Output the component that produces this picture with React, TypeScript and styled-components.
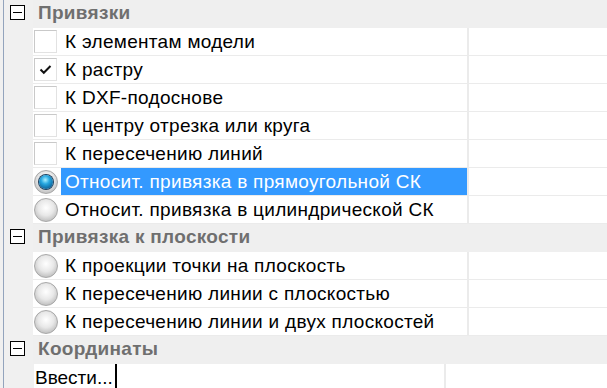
import React from 'react'
import styled, {createGlobalStyle} from 'styled-components'

const GlobalStyle = createGlobalStyle`
  html, body {
    margin: 0;
    padding: 0;
    background: #f0f0f0;
    overflow: hidden;
  }
  body {
    font-family: "Liberation Sans", Arial, sans-serif;
    letter-spacing: 0.3px;
  }
`

const Frame = styled.div`
  width: 607px;
  height: 388px;
  padding-left: 3px;
  box-sizing: border-box;
  background: #f0f0f0;
  overflow: hidden;
`
const Grid = styled.div`
  border-left: 1px solid #93a4bd;
  display: flex;
  flex-direction: column;
`
const GroupHeader = styled.div`
  display: flex;
  align-items: center;
  height: 28px;
  background: #efefef;
`
const Gutter = styled.div`
  width: 29px;
  flex: none;
  display: flex;
  align-items: center;
  justify-content: center;
  align-self: stretch;
  background: #f0f0f0;
`
const Toggle = styled.div`
  width: 15px;
  height: 15px;
  border: 1px solid #000;
  box-sizing: border-box;
  position: relative;
  margin: -3px 3px 0 0;
  background: #fff;

  &::after {
    content: '';
    position: absolute;
    left: 2px;
    right: 2px;
    top: 6px;
    height: 1px;
    background: #000;
  }
`
const GroupTitle = styled.div`
  font-size: 19px;
  font-weight: bold;
  color: #6f6f6f;
  padding-left: 5px;
  margin-top: -3px;
`
const Row = styled.div`
  display: flex;
  height: 28px;
`
const NameCell = styled.div`
  width: 434px;
  flex: none;
  display: flex;
  align-items: center;
  background: #fff;
  border-bottom: 1px solid #ebebeb;
  box-sizing: border-box;
`
const Divider = styled.div`
  width: 2px;
  flex: none;
  background: #ebebeb;
`
const ValueCell = styled.div`
  flex: 1;
  background: #fff;
  border-bottom: 1px solid #ebebeb;
  box-sizing: border-box;
`
const Box = styled.div`
  width: 23px;
  height: 23px;
  flex: none;
  margin: 0 4px 0 1px;
  box-sizing: border-box;
  border: 1px solid #c9c9c9;
  border-right-color: #e2e2e2;
  border-bottom-color: #e2e2e2;
  background: #fff;
  display: flex;
  align-items: center;
  justify-content: center;
`
const Radio = styled.div<{ $on?: boolean }>`
  width: 24px;
  height: 24px;
  flex: none;
  margin: 0 3px 0 1px;
  border-radius: 50%;
  box-sizing: border-box;
  border: 1px solid #a8a8a8;
  background: radial-gradient(circle at 50% 40%, #ffffff 0%, #e8e8e8 45%, #c4c4c4 75%, #d8d8d8 100%);
  display: flex;
  align-items: center;
  justify-content: center;

  &::after {
    content: '';
    width: 14px;
    height: 14px;
    border-radius: 50%;
    display: ${p => (p.$on ? 'block' : 'none')};
    background: radial-gradient(circle at 45% 35%, #a9f0ff 0%, #27a7e0 35%, #0a5d94 80%, #084670 100%);
    box-shadow: 0 0 0 1px #1b3f5e;
  }
`
const Label = styled.div<{ $selected?: boolean }>`
  flex: 1;
  align-self: stretch;
  display: flex;
  align-items: center;
  padding-left: 4px;
  font-size: 19px;
  color: ${p => (p.$selected ? '#fff' : '#000')};
  background: ${p => (p.$selected ? '#3399ff' : 'transparent')};
  white-space: nowrap;
`
const InputRow = styled.div`
  display: flex;
  height: 28px;
`
const EditButton = styled.div`
  width: 84px;
  flex: none;
  display: flex;
  align-items: center;
  padding-left: 1px;
  box-sizing: border-box;
  background: #fff;
  border-left: 1px solid #f0f0f0;
  border-right: 2px solid #000;
  font-size: 19px;
  letter-spacing: 0;
  color: #000;
  white-space: nowrap;
  overflow: hidden;
`
const EditRest = styled.div`
  width: 327px;
  flex: none;
  background: #fff;
`

const Check = () => (
    <svg width="13" height="11" viewBox="0 0 13 11">
        <path d="M1.5 5.5 L4.8 8.8 L11.5 2" fill="none" stroke="#111" strokeWidth="2"/>
    </svg>
)

type ItemType = {
    label: string
    kind: 'check' | 'radio'
    on?: boolean
    selected?: boolean
}

const groups: { title: string, items: ItemType[] }[] = [
    {
        title: 'Привязки',
        items: [
            {label: 'К элементам модели', kind: 'check'},
            {label: 'К растру', kind: 'check', on: true},
            {label: 'К DXF-подоснове', kind: 'check'},
            {label: 'К центру отрезка или круга', kind: 'check'},
            {label: 'К пересечению линий', kind: 'check'},
            {label: 'Относит. привязка в прямоугольной СК', kind: 'radio', on: true, selected: true},
            {label: 'Относит. привязка в цилиндрической СК', kind: 'radio'},
        ]
    },
    {
        title: 'Привязка к плоскости',
        items: [
            {label: 'К проекции точки на плоскость', kind: 'radio'},
            {label: 'К пересечению линии с плоскостью', kind: 'radio'},
            {label: 'К пересечению линии и двух плоскостей', kind: 'radio'},
        ]
    },
]

function App() {
    return (
        <Frame>
            <GlobalStyle/>
            <Grid>
                {groups.map(g => (
                    <React.Fragment key={g.title}>
                        <GroupHeader>
                            <Gutter><Toggle/></Gutter>
                            <GroupTitle>{g.title}</GroupTitle>
                        </GroupHeader>
                        {g.items.map(it => (
                            <Row key={it.label}>
                                <Gutter/>
                                <NameCell>
                                    {it.kind === 'check'
                                        ? <Box>{it.on && <Check/>}</Box>
                                        : <Radio $on={it.on}/>}
                                    <Label $selected={it.selected}>{it.label}</Label>
                                </NameCell>
                                <Divider/>
                                <ValueCell/>
                            </Row>
                        ))}
                    </React.Fragment>
                ))}
                <GroupHeader>
                    <Gutter><Toggle/></Gutter>
                    <GroupTitle>Координаты</GroupTitle>
                </GroupHeader>
                <InputRow>
                    <Gutter/>
                    <EditButton>Ввести...</EditButton>
                    <EditRest/>
                    <Divider/>
                    <ValueCell/>
                </InputRow>
            </Grid>
        </Frame>
    )
}

export default App
